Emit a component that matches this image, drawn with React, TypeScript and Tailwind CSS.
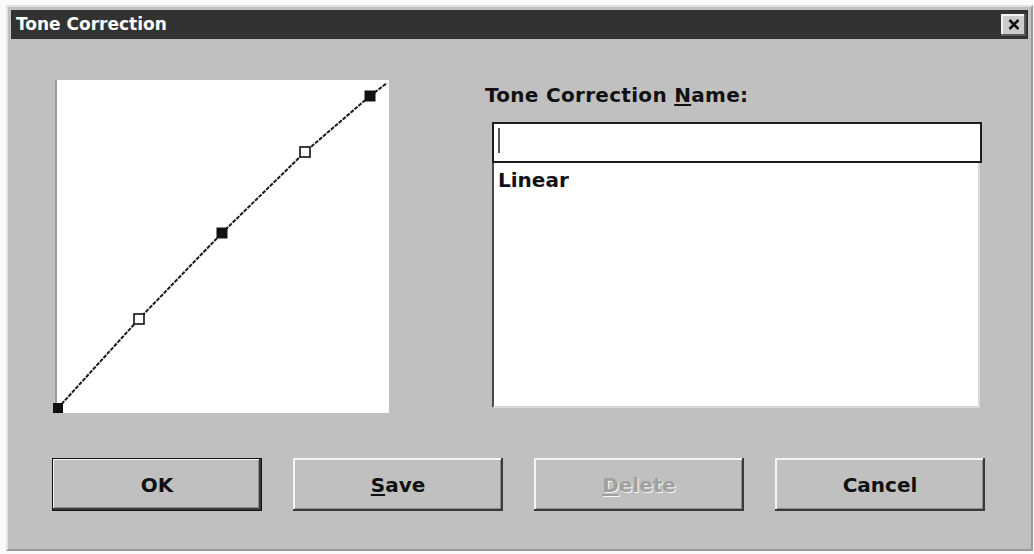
export default function App() {
  const btn =
    "w-[210px] h-[53px] flex items-center justify-center text-[20px] font-bold leading-[24px] bg-[#c0c0c0]";
  const bevel =
    "shadow-[inset_-2px_-2px_0_#3a3a3a,inset_2px_2px_0_#f4f4f4,inset_-3px_-3px_0_#8a8a8a]";
  return (
    <div className="w-[1034px] h-[554px] bg-[#fafafa] pl-[6px] pt-[5px] font-['DejaVu_Sans',sans-serif] overflow-hidden">
      <div className="w-[1027px] h-[546px] bg-[#c0c0c0] border-2 border-t-[#e2e2e2] border-l-[#e2e2e2] border-r-[#9a9a9a] border-b-[#9a9a9a] p-[3px] flex flex-col">
        {/* title bar */}
        <div className="h-[29px] shrink-0 bg-[#323232] flex items-center justify-between pl-[5px] pr-[2px]">
          <span className="text-white font-bold text-[17px] leading-none">Tone Correction</span>
          <div className="w-[25px] h-[22px] bg-[#cbcbcb] shadow-[inset_-2px_-2px_0_#5a5a5a,inset_2px_2px_0_#f4f4f4] flex items-center justify-center">
            <svg width="12" height="11" viewBox="0 0 12 11">
              <path d="M1.5 1 L10.5 10 M10.5 1 L1.5 10" stroke="#111" strokeWidth="2.6" />
            </svg>
          </div>
        </div>

        {/* main row */}
        <div className="flex items-start mt-[41px]">
          {/* graph */}
          <div className="ml-[44px] w-[334px] h-[333px] bg-white border-l-2 border-l-[#9c9c9c] shrink-0">
            <svg width="332" height="333" viewBox="0 0 332 333" className="overflow-visible block">
              <polyline
                points="1,328 82,239 165,153 248,72 313,16 330,3"
                fill="none"
                stroke="#1a1a1a"
                strokeWidth="2"
                strokeDasharray="4 1.2"
              />
              <rect x="-4" y="323" width="10" height="10" fill="#111" />
              <rect x="77" y="234" width="10" height="10" fill="#fff" stroke="#111" strokeWidth="1.6" />
              <rect x="159.5" y="147.5" width="11" height="11" fill="#111" />
              <rect x="243" y="67" width="10" height="10" fill="#fff" stroke="#111" strokeWidth="1.6" />
              <rect x="307.5" y="10.5" width="11" height="11" fill="#111" />
            </svg>
          </div>

          {/* right column */}
          <div className="ml-[96px] pt-[3px] flex flex-col">
            <div className="text-[20px] font-bold leading-[24px] tracking-[0.3px] text-[#111]">
              Tone Correction <span className="underline underline-offset-2 decoration-2">N</span>ame:
            </div>
            <div className="ml-[7px] mt-[15px] w-[490px] h-[41px] bg-white border-2 border-[#1c1c1c] relative">
              <div className="absolute left-[4px] top-[4px] w-[2px] h-[25px] bg-[#555]" />
            </div>
            <div className="ml-[7px] w-[488px] h-[245px] bg-white border-l-2 border-l-[#4a4a4a] border-r-2 border-r-[#d8d8d8] border-b-2 border-b-[#d8d8d8] pl-[4px] pt-[5px]">
              <div className="text-[20px] font-bold leading-[24px] text-[#111]">Linear</div>
            </div>
          </div>
        </div>

        {/* buttons */}
        <div className="flex gap-[31px] ml-[41px] mt-[45px]">
          <div className={`${btn} border border-[#111] shadow-[inset_-2px_-2px_0_#3a3a3a,inset_1px_1px_0_#f4f4f4,inset_-3px_-3px_0_#8a8a8a] text-[#111]`}>
            OK
          </div>
          <div className={`${btn} ${bevel} text-[#111]`}>
            <span>
              <span className="underline underline-offset-2 decoration-2">S</span>ave
            </span>
          </div>
          <div className={`${btn} ${bevel} text-[#a0a0a0] [text-shadow:1px_1px_0_#f8f8f8]`}>
            <span>
              <span className="underline underline-offset-2 decoration-2">D</span>elete
            </span>
          </div>
          <div className={`${btn} ${bevel} text-[#111]`}>Cancel</div>
        </div>
      </div>
    </div>
  );
}
